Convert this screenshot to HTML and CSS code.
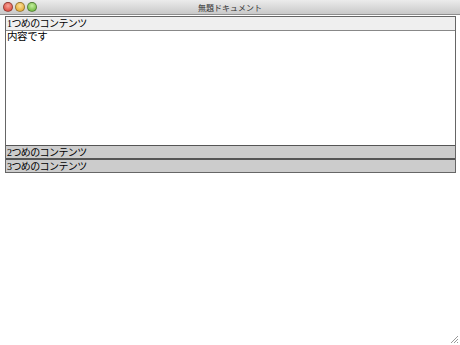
FILE: index.html
```html
<!DOCTYPE html>
<html lang="ja">
<head>
    <meta charset="UTF-8">
    <title>無題ドキュメント</title>
    <link rel="stylesheet" href="styles.css">
</head>
<body>
    <div class="titlebar">
        <div class="lights">
            <span class="light red"></span>
            <span class="light yellow"></span>
            <span class="light green"></span>
        </div>
        <div class="title">無題ドキュメント</div>
    </div>
    <div class="page">
        <div class="accordion">
            <h3 class="tab open">1つめのコンテンツ</h3>
            <div class="body">内容です</div>
            <h3 class="tab">2つめのコンテンツ</h3>
            <h3 class="tab">3つめのコンテンツ</h3>
        </div>
    </div>
    <svg class="grip" width="10" height="10" viewBox="0 0 10 10">
        <path d="M9 2 L2 9 M9 5 L5 9 M9 8 L8 9" stroke="#999" stroke-width="1"/>
    </svg>
</body>
</html>
```

FILE: styles.css
```css
* {
    margin: 0;
    padding: 0;
    box-sizing: border-box;
}

html, body {
    height: 100%;
}

body {
    font-family: 'Liberation Serif', 'Noto Sans CJK JP', serif;
    font-size: 10px;
    color: #000;
    background: #fff;
    position: relative;
}

/* window title bar */
.titlebar {
    height: 15px;
    background: linear-gradient(#ececec, #c9c9c9);
    border-bottom: 1px solid #8e8e8e;
    display: flex;
    align-items: center;
    position: relative;
}

.lights {
    display: flex;
    gap: 2px;
    padding-left: 3px;
}

.light {
    width: 10px;
    height: 10px;
    border-radius: 50%;
    border: 1px solid rgba(0, 0, 0, 0.35);
}

.red { background: radial-gradient(circle at 50% 35%, #f7a59a, #d6382b); }
.yellow { background: radial-gradient(circle at 50% 35%, #fbe09a, #e0a020); }
.green { background: radial-gradient(circle at 50% 35%, #c4ef9c, #5fae2f); }

.title {
    position: absolute;
    left: 0;
    right: 0;
    text-align: center;
    font-family: 'Noto Sans CJK JP', sans-serif;
    font-size: 8px;
    color: #333;
}

.page {
    padding: 1px 4px 0 5px;
}

.accordion {
    border: 1px solid #666;
}

.tab {
    font-size: 10px;
    font-weight: normal;
    line-height: 13px;
    height: 13px;
    padding-left: 1px;
    background: #cccccc;
    border-top: 1px solid #555;
    color: #000;
    letter-spacing: -0.6px;
}

.tab:first-child {
    border-top: none;
    background: #efefef;
}

.tab:last-child {
    height: 14px;
    border-top-width: 2px;
}

.body {
    height: 115px;
    border-top: 1px solid #888;
    padding-left: 1px;
    line-height: 12px;
    font-size: 10.5px;
    letter-spacing: -0.4px;
}

.grip {
    position: absolute;
    right: 1px;
    bottom: 1px;
}
```
